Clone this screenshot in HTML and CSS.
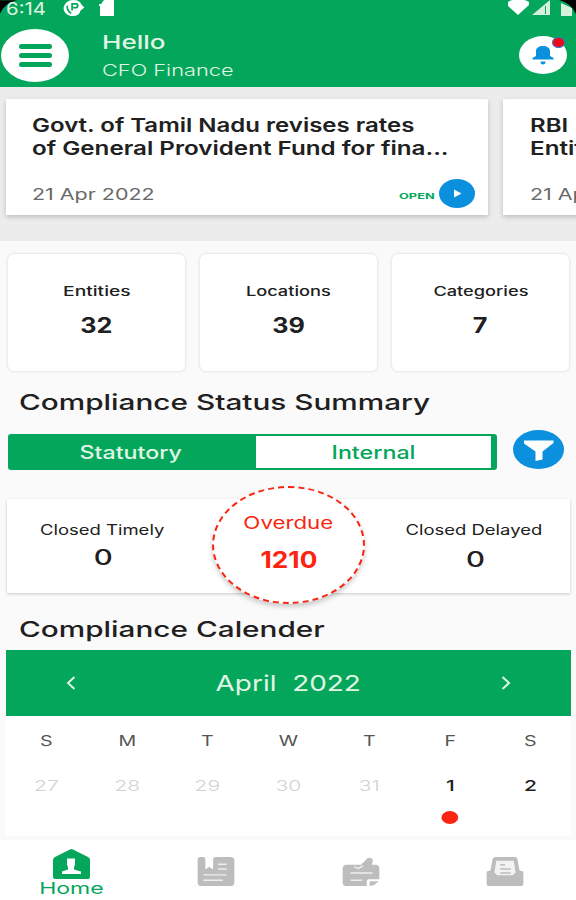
FILE: index.html
```
<!DOCTYPE html>
<html lang="en">
<head>
  <meta charset="UTF-8">
  <meta name="viewport" content="width=device-width, initial-scale=1.0">
  <title>Compliance Dashboard</title>
  <link rel="stylesheet" href="styles.css">
</head>
<body>
  <header class="header">
    <div class="status-bar">
      <svg class="corner corner-left" viewBox="0 0 20 15"><path d="M0 0H19Q5 3 0 15Z"/></svg>
      <span class="time">6:14</span>
      <svg class="status-app" viewBox="0 0 22 18">
        <path fill="#fff" d="M10 0c5 0 8 2 9 5l3 3-4 3c-1 4-4 6-8 6-6 0-10-4-10-8s4-9 10-9z"/>
        <path fill="none" stroke="#03a65a" stroke-width="1.800" d="M4 6q-1 5 4 8M9 11V4h5q2 2 0 4h-4"/>
      </svg>
      <svg class="status-sd" viewBox="0 0 16 17"><path fill="#fff" d="M5 0h10v16H1V6H0V4h2z"/></svg>
      <svg class="status-signals" viewBox="0 0 68 17">
        <path fill="#fff" d="M0 2Q10-4 21 2V5L10 15 0 6z"/>
        <path fill="#d5f0dc" d="M24 15 42 0V15zM53 3l11 5v8H53z"/>
        <path fill="#03a65a" d="M37 6h1v8h-1z"/>
      </svg>
      <svg class="corner corner-right" viewBox="0 0 17 14"><path d="M0 0H17V14Q12 3 0 0Z"/></svg>
    </div>
    <div class="title-bar">
      <button class="menu-btn" aria-label="Menu">
        <span></span><span></span><span></span>
      </button>
      <div class="user">
        <p class="hello"><span class="wide">Hello</span></p>
        <p class="role"><span class="wide">CFO Finance</span></p>
      </div>
      <button class="bell-btn" aria-label="Notifications">
        <svg viewBox="0 0 48 38">
          <path fill="#0a90dc" d="M13.500 23.500V22L17 20V15c0-3 3-5 7-5s7 2 7 5v5l3.500 2v1.500zM21.500 25.500h5q0 3-2.500 3t-2.500-3z"/>
        </svg>
        <i class="dot"></i>
      </button>
    </div>
  </header>

  <section class="news">
    <article class="news-card">
      <h3><span class="wide line-one">Govt. of Tamil Nadu revises rates</span><br><span class="wide line-two">of General Provident Fund for fina...</span></h3>
      <div class="news-footer">
        <span class="wide date">21 Apr 2022</span>
        <a class="open" href="#"><span class="wide">OPEN</span>
          <svg viewBox="0 0 36 29"><ellipse cx="18" cy="14.500" rx="18" ry="14.500" fill="#0a90dc"/><path fill="#fff" d="M15 10.500 22.500 14.500 15 18.500z"/></svg>
        </a>
      </div>
    </article>
    <article class="news-card">
      <h3><span class="wide line-one">RBI</span><br><span class="wide line-two">Entities</span></h3>
      <div class="news-footer">
        <span class="wide date">21 Apr 2022</span>
      </div>
    </article>
  </section>

  <main>
    <section class="counts">
      <div class="count-card entities"><p class="wide label">Entities</p><p class="wide value">32</p></div>
      <div class="count-card"><p class="wide label">Locations</p><p class="wide value">39</p></div>
      <div class="count-card"><p class="wide label">Categories</p><p class="wide value">7</p></div>
    </section>

    <h2><span class="wide">Compliance Status Summary</span></h2>

    <div class="filters">
      <div class="tabs">
        <button class="tab active"><span class="wide">Statutory</span></button>
        <button class="tab"><span class="wide">Internal</span></button>
      </div>
      <button class="filter-btn" aria-label="Filter">
        <svg viewBox="0 0 51 39"><ellipse cx="25.500" cy="19.500" rx="25.500" ry="19.500" fill="#0a90dc"/><path fill="#fff" d="M11 10.500H40.500V13L29.500 21.500V29.500L22.500 31V21.500L11 13.500z"/></svg>
      </button>
    </div>

    <section class="status-card">
      <div class="status-item timely"><p class="wide label">Closed Timely</p><p class="wide value">0</p></div>
      <div class="overdue"><p class="wide label">Overdue</p><p class="wide value">1210</p></div>
      <div class="status-item delayed"><p class="wide label">Closed Delayed</p><p class="wide value">0</p></div>
    </section>

    <h2 class="calendar-title"><span class="wide">Compliance Calender</span></h2>

    <section class="calendar">
      <div class="calendar-header">
        <svg viewBox="0 0 10 14"><path d="M8.500 1 2 7l6.500 6"/></svg>
        <p class="wide">April&nbsp; 2022</p>
        <svg viewBox="0 0 10 14"><path d="M1.500 1 8 7l-6.500 6"/></svg>
      </div>
      <div class="week weekdays">
        <span class="wide">S</span><span class="wide">M</span><span class="wide">T</span><span class="wide">W</span><span class="wide">T</span><span class="wide">F</span><span class="wide">S</span>
      </div>
      <div class="week days">
        <span class="wide muted">27</span><span class="wide muted">28</span><span class="wide muted">29</span><span class="wide muted">30</span><span class="wide muted">31</span><span class="wide marked">1</span><span class="wide">2</span>
      </div>
    </section>
  </main>

  <nav class="bottom-nav">
    <a class="nav-item active" href="#">
      <svg class="home-icon" viewBox="0 0 37 30">
        <path fill="#03a65a" d="M17 .5q1.500-.8 3 0L35 8q2 1 2 3v17q0 2-2 2H2q-2 0-2-2V11q0-2 2-3z"/>
        <path fill="#fff" d="M14 9.500h8v6l-1 3v2l7 2v2.500H9v-2.500l6-2v-2l-1-3z"/>
      </svg>
      <span class="wide">Home</span>
    </a>
    <a class="nav-item" href="#">
      <svg viewBox="0 0 38 30">
        <path fill="#bdbdbd" d="M3 0h3q2 0 2 2v11l4-3 4 3V3q0-3 3-3h15q4 0 4 3v23q0 4-4 4H4q-4 0-4-4V3q0-3 3-3z"/>
        <path stroke="#eee" stroke-width="1.500" d="M21 7.500h9M21 12.500h9M6 18.500h24M6 24h20"/>
      </svg>
    </a>
    <a class="nav-item" href="#">
      <svg viewBox="0 0 38 30">
        <path fill="#bdbdbd" d="M4 8h15l5-5q2-3 5-2 3 1 2 4l-1 3h4q4 0 4 4v11H27q-2 0-2 3v4H4q-4 0-4-4V12q0-4 4-4z"/>
        <path fill="#bdbdbd" d="M28 25h9q-3 4-9 5z"/>
        <path fill="none" stroke="#eee" stroke-width="1.500" d="M12 10l4 2 5-3M8 16.500h23M8 24h12"/>
      </svg>
    </a>
    <a class="nav-item" href="#">
      <svg viewBox="0 0 38 30">
        <path fill="#bdbdbd" d="M10 0h19q3 0 3 3l2 11 4 1v13q0 2-2 2H2q-2 0-2-2V15l4-1L6 3q0-3 4-3z"/>
        <path fill="#f3f3f3" d="M10 4h18l2 12-3 3H11l-3-3z"/>
        <path stroke="#bdbdbd" stroke-width="1.600" d="M14 8h5M14 12.500h11M14 16.500h11"/>
      </svg>
    </a>
  </nav>
</body>
</html>
```
FILE: styles.css
```
* {
  margin: 0;
  padding: 0;
  box-sizing: border-box;
}

:root {
  --green: #03a65a;
  --blue: #0a90dc;
  --red: #fb2410;
  --dark: #202020;
}

body {
  width: 576px;
  height: 900px;
  overflow: hidden;
  display: flex;
  flex-direction: column;
  font-family: 'Inter', 'Open Sans', sans-serif;
  color: var(--dark);
  background: #fafafa;
}

button {
  border: none;
  background: none;
  font: inherit;
  cursor: pointer;
}

a {
  text-decoration: none;
}

svg {
  display: block;
}

/* extended letterforms, the ratio is set per element */
.wide {
  display: inline-block;
  white-space: nowrap;
  transform: scaleX(var(--sx, 1.4));
}

/* header */
.header {
  height: 87px;
  flex: none;
  background: var(--green);
  color: #e0f5e4;
}

.status-bar {
  height: 18px;
  display: flex;
  position: relative;
}

.time {
  width: 58px;
  padding-left: 5px;
  font-size: 17px;
  line-height: 18px;
  transform: scaleX(1.2);
  transform-origin: left;
}

.status-app {
  width: 22px;
  height: 17px;
  margin-left: 5px;
}

.status-sd {
  width: 16px;
  height: 17px;
  margin-left: 14px;
}

.status-signals {
  width: 68px;
  height: 17px;
  margin-left: auto;
}

.corner {
  position: absolute;
  top: 0;
}

.corner-left {
  left: 0;
  width: 18px;
  height: 14px;
}

.corner-right {
  right: 0;
  width: 17px;
  height: 14px;
}

.title-bar {
  display: flex;
  padding-top: 11px;
}

.menu-btn {
  width: 68px;
  height: 53px;
  margin-left: 1px;
  border-radius: 50%;
  background: #fff;
  display: flex;
  flex-direction: column;
  align-items: center;
  justify-content: center;
  gap: 4px;
}

.menu-btn span {
  width: 33px;
  height: 5px;
  border-radius: 3px;
  background: var(--green);
}

.user {
  margin-left: 33px;
}

.user .wide {
  transform-origin: left;
}

.hello {
  --sx: 1.37;
  margin-top: 4px;
  font-size: 19px;
  line-height: 20px;
  font-weight: 500;
}

.role {
  --sx: 1.36;
  margin-top: 6px;
  font-size: 16px;
  line-height: 22px;
  font-weight: 300;
}

.bell-btn {
  width: 48px;
  height: 38px;
  margin: 7px 9px 0 auto;
  border-radius: 50%;
  background: #fff;
  position: relative;
}

.dot {
  position: absolute;
  top: 1px;
  right: 2px;
  width: 13px;
  height: 11px;
  border-radius: 50%;
  border: 1px solid #3578c8;
  background: #ee0a18;
}

/* news slider */
.news {
  height: 154px;
  flex: none;
  padding: 12px 0 0 6px;
  display: flex;
  gap: 15px;
  overflow: hidden;
  background: #ececec;
}

.news-card {
  width: 482px;
  height: 116px;
  flex: none;
  padding: 15px 13px 0 26px;
  background: #fff;
  box-shadow: 0 2px 5px rgba(0, 0, 0, 0.2);
}

.news-card + .news-card {
  padding-left: 27px;
}

.news-card .wide {
  transform-origin: left;
}

.news-card h3 {
  font-size: 19px;
  line-height: 23px;
  font-weight: 600;
}

.line-one {
  --sx: 1.263;
}

.line-two {
  --sx: 1.272;
}

.news-footer {
  height: 29px;
  margin-top: 19px;
  display: flex;
  align-items: center;
  justify-content: space-between;
}

.date {
  --sx: 1.34;
  color: #686868;
  font-size: 16px;
}

.open {
  --sx: 1.6;
  display: flex;
  align-items: center;
  gap: 18px;
  color: var(--green);
  font-size: 8px;
  font-weight: 700;
}

.open .wide {
  margin-top: 4px;
}

.open svg {
  width: 36px;
  height: 29px;
}

/* counts */
.counts {
  display: flex;
  gap: 15px;
  padding: 13px 7px 0 8px;
}

.count-card {
  flex: 1;
  height: 117px;
  padding-top: 27px;
  display: flex;
  flex-direction: column;
  align-items: center;
  border-radius: 6px;
  background: #fff;
  box-shadow: 0 0 3px rgba(0, 0, 0, 0.16);
}

.count-card .label {
  font-size: 13px;
  line-height: 20px;
  font-weight: 500;
}

.count-card.entities .label {
  --sx: 1.48;
}

.count-card .value {
  --sx: 1.2;
  margin-top: 13px;
  font-size: 21px;
  line-height: 24px;
  font-weight: 700;
}

h2 {
  --sx: 1.352;
  height: 63px;
  padding: 16px 0 0 19px;
  font-size: 22px;
  line-height: 30px;
  font-weight: 500;
}

h2 .wide {
  transform-origin: left;
}

/* tabs */
.filters {
  display: flex;
  align-items: center;
  height: 36px;
  padding: 0 12px 0 8px;
  justify-content: space-between;
}

.tabs {
  width: 489px;
  height: 36px;
  display: flex;
  border: 2px solid var(--green);
  border-right-width: 6px;
  border-radius: 3px;
  background: #fff;
}

.tab {
  --sx: 1.29;
  flex: 1;
  padding-top: 2px;
  font-size: 18px;
  font-weight: 500;
  line-height: 30px;
  color: var(--green);
}

.tab.active {
  flex: 0 0 246px;
  padding-right: 4px;
  color: #e0f5e4;
  background: var(--green);
}

.filter-btn {
  margin-top: -5px;
}

.filter-btn svg {
  width: 51px;
  height: 39px;
}

/* status card */
.status-card {
  height: 94px;
  margin: 29px 6px 0 7px;
  display: flex;
  justify-content: space-between;
  background: #fff;
  box-shadow: 0 1px 3px rgba(0, 0, 0, 0.2);
}

.status-item,
.overdue {
  display: flex;
  flex-direction: column;
  align-items: center;
}

.status-item {
  width: 190px;
  padding-top: 21px;
}

.status-item.delayed {
  padding-right: 3px;
}

.status-item .label {
  --sx: 1.32;
  font-size: 14px;
  line-height: 20px;
}

.status-item .value {
  margin-top: 6px;
  font-size: 21px;
  line-height: 24px;
  font-weight: 500;
}

.timely .value {
  padding-left: 2px;
}

.delayed .value {
  margin-top: 8px;
  padding-left: 3px;
}

.overdue {
  width: 153px;
  height: 118px;
  margin-top: -13px;
  padding-top: 23px;
  border: 2px dashed var(--red);
  border-radius: 50%;
  color: var(--red);
  background: #fff;
  box-shadow: 0 3px 5px rgba(0, 0, 0, 0.2);
}

.overdue .label {
  --sx: 1.31;
  font-size: 17px;
  line-height: 24px;
}

.overdue .value {
  --sx: 1.14;
  margin-top: 13px;
  font-size: 23px;
  line-height: 24px;
  font-weight: 700;
}

.calendar-title {
  height: 57px;
  padding-top: 21px;
}

/* calendar */
.calendar {
  height: 186px;
  margin: 0 5px 0 6px;
  background: #fff;
}

.calendar-header {
  --sx: 1.27;
  height: 66px;
  padding: 0 60px;
  display: flex;
  align-items: center;
  justify-content: space-between;
  color: #e0f5e4;
  background: var(--green);
  font-size: 22px;
}

.calendar-header svg {
  width: 10px;
  height: 14px;
  fill: none;
  stroke: #e0f5e4;
  stroke-width: 2;
}

.week {
  display: grid;
  grid-template-columns: repeat(7, 1fr);
  text-align: center;
}

.weekdays {
  padding-top: 15px;
  color: #555;
  font-size: 14px;
  line-height: 20px;
}

.days {
  padding-top: 25px;
  font-size: 15px;
  line-height: 20px;
  font-weight: 500;
}

.muted {
  color: #d2d2d2;
  font-weight: 300;
}

.marked::after {
  content: "";
  display: block;
  width: 12px;
  height: 13px;
  margin: 15px auto 0;
  border-radius: 50%;
  background: var(--red);
}

/* bottom nav */
.bottom-nav {
  height: 60px;
  flex: none;
  margin-top: auto;
  display: flex;
  background: #fff;
}

.nav-item {
  width: 144.500px;
  flex: none;
  padding-top: 17px;
  display: flex;
  flex-direction: column;
  align-items: center;
}

.nav-item svg {
  width: 38px;
  height: 29px;
}

.nav-item.active {
  --sx: 1.44;
  width: 142px;
  margin-right: 2px;
  padding-top: 9px;
  color: var(--green);
  font-size: 16px;
  line-height: 18px;
}

.nav-item .home-icon {
  width: 37px;
  height: 30px;
}
```
